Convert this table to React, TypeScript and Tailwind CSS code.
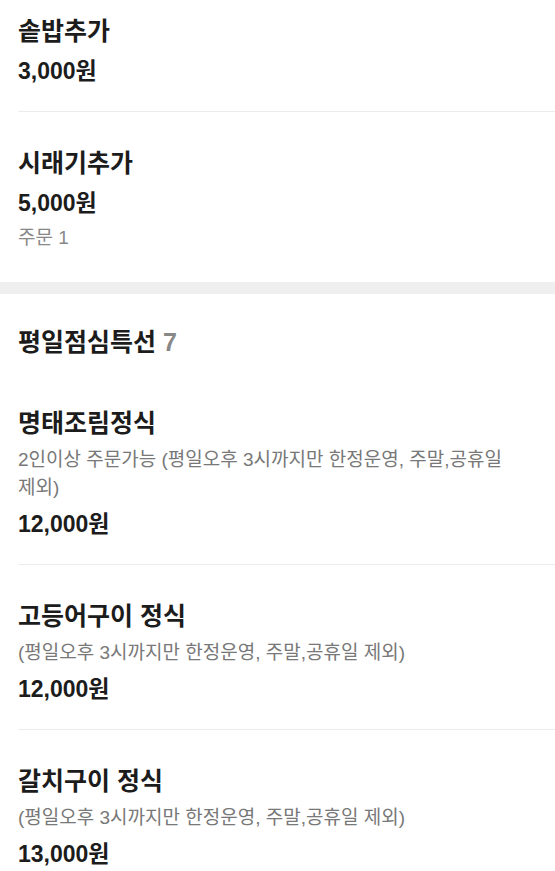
type MenuItem = {
  name: string
  desc?: string
  price: string
  orders?: number
}

const extras: MenuItem[] = [
  { name: '솥밥추가', price: '3,000원' },
  { name: '시래기추가', price: '5,000원', orders: 1 },
]

const lunch: MenuItem[] = [
  {
    name: '명태조림정식',
    desc: '2인이상 주문가능 (평일오후 3시까지만 한정운영, 주말,공휴일 제외)',
    price: '12,000원',
  },
  { name: '고등어구이 정식', desc: '(평일오후 3시까지만 한정운영, 주말,공휴일 제외)', price: '12,000원' },
  { name: '갈치구이 정식', desc: '(평일오후 3시까지만 한정운영, 주말,공휴일 제외)', price: '13,000원' },
]

function Row({ item, first, last }: { item: MenuItem; first?: boolean; last?: boolean }) {
  return (
    <li
      className={`ml-[18px] pr-[18px] break-keep ${first ? 'pt-[15px]' : 'pt-[35px]'} ${
        last ? 'pb-[24px]' : 'border-b border-[#ececec] pb-[24px]'
      }`}
    >
      <h3 className="text-[25px] font-bold leading-8 text-[#1c1c1c]">{item.name}</h3>
      {item.desc && <p className="mt-[7px] text-[19px] leading-7 text-[#787878]">{item.desc}</p>}
      <p className={`${item.desc ? 'mt-[6px]' : 'mt-2'} text-[23px] font-bold leading-8 text-[#1c1c1c]`}>
        {item.price}
      </p>
      {item.orders !== undefined && (
        <p className="mt-[5px] text-[19px] leading-7 text-[#888888]">주문 {item.orders}</p>
      )}
    </li>
  )
}

export default function App() {
  return (
    <main className="min-h-screen bg-white font-['Liberation_Sans','Noto_Sans_CJK_KR',sans-serif]">
      <ul className="pb-[6px]">
        {extras.map((item, i) => (
          <Row key={item.name} item={item} first={i === 0} last={i === extras.length - 1} />
        ))}
      </ul>

      <div className="h-3 bg-[#efefef]" />

      <section>
        <h2 className="px-[18px] pt-8 pb-[14px] text-[25px] font-bold leading-8 text-[#1c1c1c]">
          평일점심특선 <span className="text-[#888888]">{7}</span>
        </h2>
        <ul>
          {lunch.map((item, i) => (
            <Row key={item.name} item={item} last={i === lunch.length - 1} />
          ))}
        </ul>
      </section>
    </main>
  )
}
